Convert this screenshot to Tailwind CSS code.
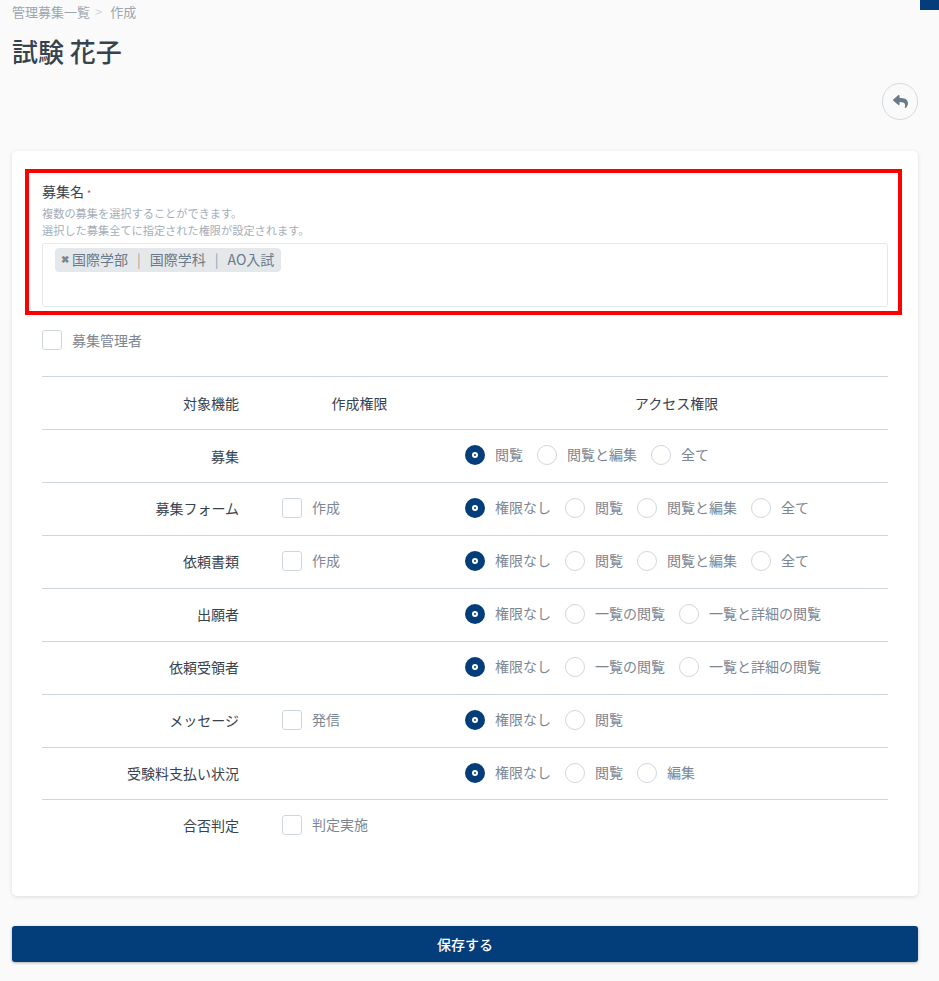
<!DOCTYPE html>
<html lang="ja">
  <head>
    <meta charset="UTF-8" />
    <meta name="viewport" content="width=device-width, initial-scale=1.0" />
    <title>管理募集一覧 作成</title>
    <script src="https://cdn.jsdelivr.net/npm/@tailwindcss/browser@4"></script>
  </head>
  <body class="bg-[#fafafa] font-['Noto_Sans_CJK_JP','Noto_Sans',sans-serif] text-[14px] text-[#37424d]">
    <div class="absolute top-0 right-0 w-[19px] h-[10px] bg-[#043e7a]"></div>
    <div class="h-[981px] overflow-hidden pl-[12px] pr-[21px]">
      <!-- breadcrumb -->
      <div class="h-[24px] flex items-center gap-[5px] text-[13px] leading-[24px] text-[#9aa5b1]">
        <span>管理募集一覧</span><span class="text-[#ccd3da]">&gt;</span><span class="ml-[3px]">作成</span>
      </div>
      <h1 class="mt-[9px] h-[36px] text-[26px] leading-[36px] font-medium text-[#37424d]">試験 花子</h1>
      <div class="mt-[14px] flex justify-end">
        <button class="w-[36px] h-[37px] rounded-full border border-[#d3dae1] flex items-center justify-center">
          <svg class="w-[15px] h-[15px] text-[#6b7a89]" viewBox="0 0 512 512" fill="currentColor"><path d="M8.309 189.836L184.313 37.851C199.719 24.546 224 35.347 224 56.015v80.053c160.629 1.839 288 34.032 288 186.258 0 61.441-39.581 122.309-83.333 154.132-13.653 9.931-33.111-2.533-28.077-18.631 45.344-145.012-21.507-183.51-176.59-185.742V360c0 20.7-24.3 31.453-39.687 18.164l-176.004-152c-11.071-9.562-11.086-26.753 0-36.328z"/></svg>
        </button>
      </div>

      <!-- card -->
      <div class="mt-[31px] h-[745px] bg-white rounded-[5px] shadow-[0_1px_4px_rgba(0,0,0,0.12)] pt-[18px] px-[13px]">
        <div class="h-[146px] mr-[3px] border-[4px] border-[#ff0000] pl-[13px] pr-[10px] pt-[8px]">
          <div class="flex h-[20px] items-center text-[#37424d] leading-[20px]">募集名<span class="ml-[3px] pt-[5px] text-[9px] text-[#e0405a]">*</span></div>
          <p class="mt-[4px] text-[11.2px] leading-[17px] text-[#a5aeb8]">複数の募集を選択することができます。<br />選択した募集全てに指定された権限が設定されます。</p>
          <div class="mt-[4px] h-[64px] flex items-start rounded-[3px] border border-[#e3e8ec] pt-[4px] pl-[12px]">
            <span class="flex h-[24px] items-center rounded-[4px] bg-[#e4e8eb] pl-[6px] pr-[7px] pb-[2px] text-[14px] leading-[22px] text-[#6b7a89]">
              <span class="text-[10px] font-bold mr-[3px] text-[#7c8793]">✖</span>国際学部<span class="mx-[9px] text-[#b8a08c]">|</span>国際学科<span class="mx-[9px] text-[#8ea3b8]">|</span>AO入試
            </span>
          </div>
        </div>

        <div class="px-[17px]">
          <label class="mt-[14px] flex items-center gap-[10px] h-[22px] text-[#7c8793]">
            <span class="w-[20px] h-[20px] rounded-[3px] border border-[#cfd7de] bg-white"></span>募集管理者
          </label>

          <div class="mt-[25px]">
            <!-- header -->
            <div class="h-[53px] border-t border-[#cfd6dd] flex items-center">
              <div class="w-[197px] text-right">対象機能</div>
              <div class="ml-[43px] w-[155px] text-center">作成権限</div>
              <div class="ml-[28px] flex-1 text-center">アクセス権限</div>
            </div>

            <div class="h-[53px] border-t border-[#cfd6dd] flex items-start pt-[14px]">
              <div class="w-[197px] text-right leading-[24px]">募集</div>
              <div class="ml-[43px] w-[155px]"></div>
              <div class="ml-[28px] flex items-center gap-[10px] text-[#7c8793]">
                <span class="w-[20px] h-[20px] rounded-full bg-[#043e7a] flex items-center justify-center"><span class="w-[6px] h-[6px] rounded-full border-[2px] border-white"></span></span><span class="mr-[4px]">閲覧</span>
                <span class="w-[20px] h-[20px] rounded-full border border-[#cfd7de]"></span><span class="mr-[4px]">閲覧と編集</span>
                <span class="w-[20px] h-[20px] rounded-full border border-[#cfd7de]"></span><span>全て</span>
              </div>
            </div>

            <div class="h-[53px] border-t border-[#cfd6dd] flex items-start pt-[14px]">
              <div class="w-[197px] text-right leading-[23px]">募集フォーム</div>
              <div class="ml-[43px] w-[155px] flex items-center gap-[10px] text-[#7c8793]"><span class="w-[20px] h-[20px] rounded-[3px] border border-[#cfd7de]"></span>作成</div>
              <div class="ml-[28px] flex items-center gap-[10px] text-[#7c8793]">
                <span class="w-[20px] h-[20px] rounded-full bg-[#043e7a] flex items-center justify-center"><span class="w-[6px] h-[6px] rounded-full border-[2px] border-white"></span></span><span class="mr-[4px]">権限なし</span>
                <span class="w-[20px] h-[20px] rounded-full border border-[#cfd7de]"></span><span class="mr-[4px]">閲覧</span>
                <span class="w-[20px] h-[20px] rounded-full border border-[#cfd7de]"></span><span class="mr-[4px]">閲覧と編集</span>
                <span class="w-[20px] h-[20px] rounded-full border border-[#cfd7de]"></span><span>全て</span>
              </div>
            </div>

            <div class="h-[53px] border-t border-[#cfd6dd] flex items-start pt-[14px]">
              <div class="w-[197px] text-right leading-[23px]">依頼書類</div>
              <div class="ml-[43px] w-[155px] flex items-center gap-[10px] text-[#7c8793]"><span class="w-[20px] h-[20px] rounded-[3px] border border-[#cfd7de]"></span>作成</div>
              <div class="ml-[28px] flex items-center gap-[10px] text-[#7c8793]">
                <span class="w-[20px] h-[20px] rounded-full bg-[#043e7a] flex items-center justify-center"><span class="w-[6px] h-[6px] rounded-full border-[2px] border-white"></span></span><span class="mr-[4px]">権限なし</span>
                <span class="w-[20px] h-[20px] rounded-full border border-[#cfd7de]"></span><span class="mr-[4px]">閲覧</span>
                <span class="w-[20px] h-[20px] rounded-full border border-[#cfd7de]"></span><span class="mr-[4px]">閲覧と編集</span>
                <span class="w-[20px] h-[20px] rounded-full border border-[#cfd7de]"></span><span>全て</span>
              </div>
            </div>

            <div class="h-[53px] border-t border-[#cfd6dd] flex items-start pt-[14px]">
              <div class="w-[197px] text-right leading-[23px]">出願者</div>
              <div class="ml-[43px] w-[155px]"></div>
              <div class="ml-[28px] flex items-center gap-[10px] text-[#7c8793]">
                <span class="w-[20px] h-[20px] rounded-full bg-[#043e7a] flex items-center justify-center"><span class="w-[6px] h-[6px] rounded-full border-[2px] border-white"></span></span><span class="mr-[4px]">権限なし</span>
                <span class="w-[20px] h-[20px] rounded-full border border-[#cfd7de]"></span><span class="mr-[4px]">一覧の閲覧</span>
                <span class="w-[20px] h-[20px] rounded-full border border-[#cfd7de]"></span><span>一覧と詳細の閲覧</span>
              </div>
            </div>

            <div class="h-[53px] border-t border-[#cfd6dd] flex items-start pt-[14px]">
              <div class="w-[197px] text-right leading-[23px]">依頼受領者</div>
              <div class="ml-[43px] w-[155px]"></div>
              <div class="ml-[28px] flex items-center gap-[10px] text-[#7c8793]">
                <span class="w-[20px] h-[20px] rounded-full bg-[#043e7a] flex items-center justify-center"><span class="w-[6px] h-[6px] rounded-full border-[2px] border-white"></span></span><span class="mr-[4px]">権限なし</span>
                <span class="w-[20px] h-[20px] rounded-full border border-[#cfd7de]"></span><span class="mr-[4px]">一覧の閲覧</span>
                <span class="w-[20px] h-[20px] rounded-full border border-[#cfd7de]"></span><span>一覧と詳細の閲覧</span>
              </div>
            </div>

            <div class="h-[53px] border-t border-[#cfd6dd] flex items-start pt-[14px]">
              <div class="w-[197px] text-right leading-[23px]">メッセージ</div>
              <div class="ml-[43px] w-[155px] flex items-center gap-[10px] text-[#7c8793]"><span class="w-[20px] h-[20px] rounded-[3px] border border-[#cfd7de]"></span>発信</div>
              <div class="ml-[28px] flex items-center gap-[10px] text-[#7c8793]">
                <span class="w-[20px] h-[20px] rounded-full bg-[#043e7a] flex items-center justify-center"><span class="w-[6px] h-[6px] rounded-full border-[2px] border-white"></span></span><span class="mr-[4px]">権限なし</span>
                <span class="w-[20px] h-[20px] rounded-full border border-[#cfd7de]"></span><span>閲覧</span>
              </div>
            </div>

            <div class="h-[52px] border-t border-[#cfd6dd] flex items-start pt-[14px]">
              <div class="w-[197px] text-right leading-[23px]">受験料支払い状況</div>
              <div class="ml-[43px] w-[155px]"></div>
              <div class="ml-[28px] flex items-center gap-[10px] text-[#7c8793]">
                <span class="w-[20px] h-[20px] rounded-full bg-[#043e7a] flex items-center justify-center"><span class="w-[6px] h-[6px] rounded-full border-[2px] border-white"></span></span><span class="mr-[4px]">権限なし</span>
                <span class="w-[20px] h-[20px] rounded-full border border-[#cfd7de]"></span><span class="mr-[4px]">閲覧</span>
                <span class="w-[20px] h-[20px] rounded-full border border-[#cfd7de]"></span><span>編集</span>
              </div>
            </div>

            <div class="h-[53px] border-t border-[#cfd6dd] flex items-start pt-[14px]">
              <div class="w-[197px] text-right leading-[23px]">合否判定</div>
              <div class="ml-[43px] w-[155px] flex items-center gap-[10px] text-[#7c8793]"><span class="w-[20px] h-[20px] rounded-[3px] border border-[#cfd7de]"></span>判定実施</div>
            </div>
          </div>
        </div>
      </div>

      <button class="mt-[30px] w-full h-[36px] rounded-[3px] bg-[#043e7a] text-white text-[14px] font-medium shadow-[0_1px_3px_rgba(0,0,0,0.3)]">保存する</button>
    </div>
  </body>
</html>
